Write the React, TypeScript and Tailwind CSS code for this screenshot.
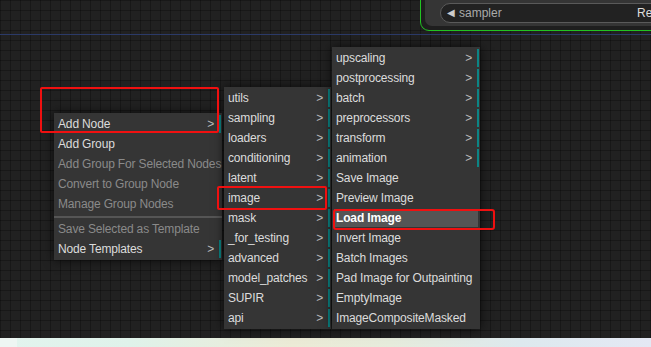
import React from "react";

type Item = { label: string; sub?: boolean; disabled?: boolean; active?: boolean; sep?: boolean };

const font = { fontFamily: '"Liberation Sans", Arial, sans-serif' };

function Menu({ items, className }: { items: Item[]; className: string }) {
  return (
    <div className={`absolute flex flex-col bg-[#353535] py-[1px] shadow-[0_0_10px_rgba(0,0,0,0.7)] ${className}`}>
      {items.map((it, i) =>
        it.sep ? (
          <div key={i} className="mt-[2px] mb-[1px] h-[2px] bg-[#555]" />
        ) : (
          <div
            key={i}
            className={`relative flex h-[20px] items-center justify-between pl-[4px] pr-[8px] text-[12px] tracking-[-0.15px] leading-none ${
              it.disabled ? "text-[#8a8a8a]" : it.active ? "text-white font-bold" : "text-[#dcdcdc]"
            }`}
          >
            {it.active && <div className="absolute inset-y-[1px] left-[2px] right-[2px] bg-[#555]" />}
            <span className="relative whitespace-nowrap">{it.label}</span>
            {it.sub && (
              <>
                <span className="relative text-[#bbb] text-[12px]">&gt;</span>
                <div className="absolute right-[1px] top-[1px] bottom-[1px] w-[2px] bg-[#0b8585]" />
              </>
            )}
          </div>
        )
      )}
    </div>
  );
}

export default function App() {
  const m1: Item[] = [
    { label: "Add Node", sub: true },
    { label: "Add Group" },
    { label: "Add Group For Selected Nodes", disabled: true },
    { label: "Convert to Group Node", disabled: true },
    { label: "Manage Group Nodes", disabled: true },
    { label: "", sep: true },
    { label: "Save Selected as Template", disabled: true },
    { label: "Node Templates", sub: true },
  ];
  const m2: Item[] = [
    "utils",
    "sampling",
    "loaders",
    "conditioning",
    "latent",
    "image",
    "mask",
    "_for_testing",
    "advanced",
    "model_patches",
    "SUPIR",
    "api",
  ].map((l) => ({ label: l, sub: true }));
  const m3: Item[] = [
    { label: "upscaling", sub: true },
    { label: "postprocessing", sub: true },
    { label: "batch", sub: true },
    { label: "preprocessors", sub: true },
    { label: "transform", sub: true },
    { label: "animation", sub: true },
    { label: "Save Image" },
    { label: "Preview Image" },
    { label: "Load Image", active: true },
    { label: "Invert Image" },
    { label: "Batch Images" },
    { label: "Pad Image for Outpainting" },
    { label: "EmptyImage" },
    { label: "ImageCompositeMasked" },
  ];

  return (
    <div className="relative flex flex-col w-[651px] h-[347px] overflow-hidden bg-[#222]" style={font}>
      {/* canvas */}
      <div className="relative h-[338px] shrink-0 bg-[#212121] bg-[image:linear-gradient(to_right,rgba(0,0,0,0.28)_1px,transparent_1px),linear-gradient(to_bottom,rgba(0,0,0,0.28)_1px,transparent_1px)] bg-[size:10px_10px]">
        {/* blue link line */}
        <div className="absolute left-0 right-0 top-[34px] h-[1px] bg-[#2b3a68]" />

        {/* node top right */}
        <div className="absolute left-[420px] top-[-20px] w-[260px] h-[51px] rounded-[9px] border-[1.5px] border-[#22c322] bg-[#1e1e1e] pl-[4px] pb-[4px] flex">
          <div className="flex-1 rounded-[7px] bg-[#353535] pl-[15px] pt-[22px]">
            <div className="relative h-[20px] rounded-full border border-[#5a5a5a] bg-[#222] flex items-center">
              <span className="ml-[6px] text-[#ccc] text-[10px] leading-none">◀</span>
              <span className="ml-[4px] text-[#aaa] text-[12px] leading-none">sampler</span>
              <span className="absolute left-[196px] text-[#ddd] text-[12px] leading-none">Re</span>
            </div>
          </div>
        </div>

        <Menu items={m1} className="left-[54px] top-[113px] w-[168px]" />
        <Menu items={m2} className="left-[224px] top-[87px] w-[107px]" />
        <Menu items={m3} className="left-[332px] top-[47px] w-[148px]" />

        {/* red annotation boxes */}
        <div className="absolute left-[40px] top-[87px] w-[179px] h-[46px] rounded-[2px] border-[2.5px] border-[#f01010]" />
        <div className="absolute left-[217px] top-[186px] w-[110px] h-[24px] rounded-[2px] border-[2.5px] border-[#f01010]" />
        <div className="absolute left-[333px] top-[209px] w-[162px] h-[21px] rounded-[3px] border-[2.5px] border-[#f01010]" />
      </div>
      {/* bottom strip */}
      <div className="flex h-[9px] bg-[linear-gradient(to_right,#e2f4ee,#dff2ea_20%,#ecebd6_45%,#e6ecdc_60%,#dde9ee_80%,#e4e8f4)]">
        <div className="w-[17px] bg-[#eef6f3]" />
      </div>
    </div>
  );
}
